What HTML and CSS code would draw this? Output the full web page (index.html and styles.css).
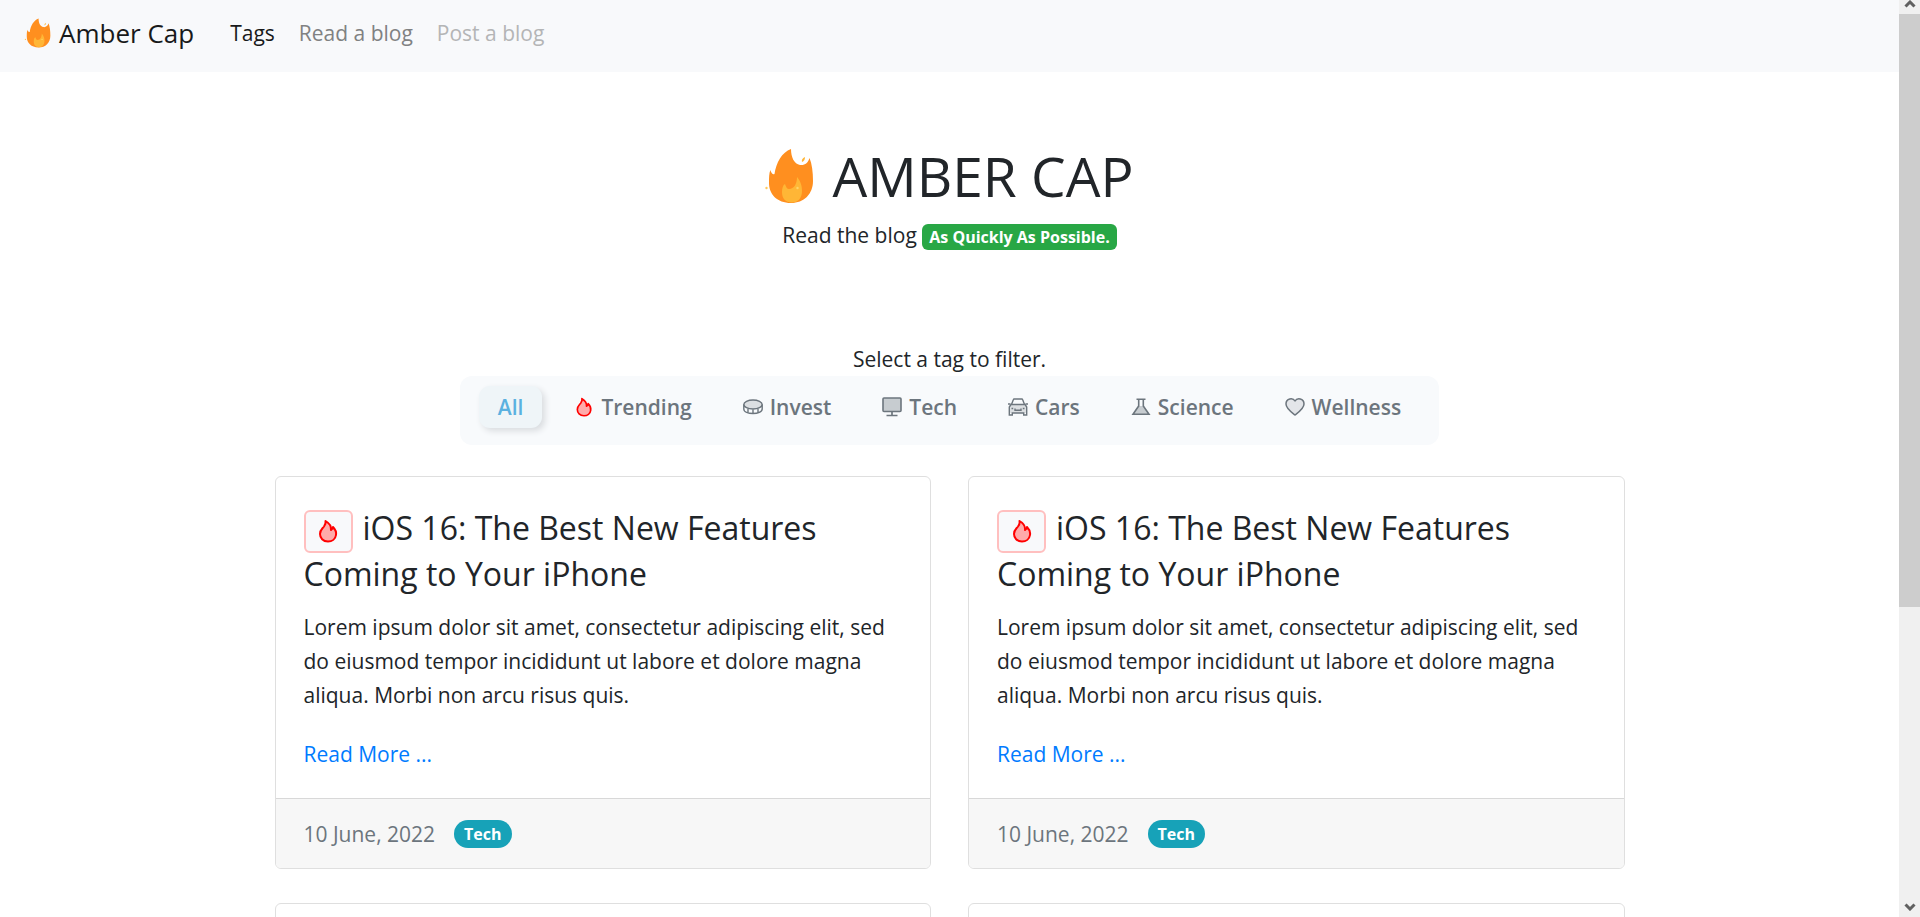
FILE: index.html
```html
<!DOCTYPE html>
<html lang="en">
<head>
<meta charset="utf-8">
<title>Amber Cap</title>
<link rel="stylesheet" href="styles.css">
</head>
<body>
<svg class="sprite" aria-hidden="true">
  <symbol id="flame-logo" viewBox="0 0 48 56">
    <path fill="#ff8f1f" d="M26 1C26 9 29 16 35 17C40 17.500 43 15 44.500 10C47 16 48 24 48 33C48 46 39 55 26 55C12 55 4 46 4 35C4 30 4 25 5.500 22C6 25 8 27 9.500 26C11 15 17 4 26 1Z"/>
    <path fill="#ffb636" d="M32 29C36 34 37 38 37 43C37 50 33 54.500 27 54.500C20 54.500 17 50 17 44C17 40 18 37 20 36C21 39 22 41 24 41C29 41 32 36 32 29Z"/>
    <path fill="#ffb636" d="M37 14Q40 13 40 9Q36 11 37 14Z"/>
    <circle fill="#ffc95c" cx="1.500" cy="40" r="1.200"/>
    <circle fill="#ffd469" cx="32.500" cy="40" r="1.200"/>
  </symbol>
  <symbol id="fire" viewBox="0 0 20 24">
    <path d="M7.500 2C11 4 13.500 7 13 11C14.200 10.500 15 9.500 15 8C17.500 10.500 18.500 13 18 16C17.500 20 14 22.500 10 22.500C5 22.500 2 19 2 15C2 11 4 10 6 7.500C7.500 5.500 8 4 7.500 2Z" fill="#faa" stroke="red" stroke-width="2" stroke-linejoin="round"/>
  </symbol>
  <symbol id="coin" viewBox="0 0 20 20">
    <g fill="none" stroke="currentColor" stroke-width="1.400"><ellipse cx="10" cy="7.500" rx="9.200" ry="4.500" fill="currentColor" fill-opacity=".2"/><path d="M.8 7.500V12C.8 18 19.200 18 19.200 12V7.500M5 11.500V15.500M10 12.500V16.500M15 11.500V15.500"/></g>
  </symbol>
  <symbol id="desktop" viewBox="0 0 20 20">
    <path fill="currentColor" fill-opacity=".35" stroke="currentColor" stroke-width="1.600" d="M2 1H18Q19 1 19 2V13.500Q19 14.500 18 14.500H2Q1 14.500 1 13.500V2Q1 1 2 1Z"/><path fill="none" stroke="currentColor" stroke-width="1.700" d="M10 14.500V18.500M4.500 18.500H15.500"/>
  </symbol>
  <symbol id="car" viewBox="0 0 20 20">
    <path fill="currentColor" fill-opacity=".2" d="M1.500 8H18.500V16H1.500Z"/>
    <g fill="none" stroke="currentColor" stroke-width="1.400"><path d="M3.500 7.500L5.300 2.700Q5.500 2 6.300 2H13.700Q14.500 2 14.700 2.700L16.500 7.500M0 7H2.500M17.500 7H20"/><path d="M3 7.500H17L18.700 10V18H15.700V16H4.300V18H1.300V10Z"/><path d="M7 11.500V13.300H13V11.500M3.500 11.500H5.200M14.800 11.500H16.500"/></g>
  </symbol>
  <symbol id="flask" viewBox="0 0 20 20">
    <path fill="currentColor" fill-opacity=".35" d="M7.700 9H12.300L18 17.500H2Z"/><path fill="none" stroke="currentColor" stroke-width="1.600" d="M5.500 2.300H14.500M7.700 2.500V9L2 17.300H18L12.300 9V2.500"/>
  </symbol>
  <symbol id="heart" viewBox="0 0 20 20">
    <path fill="currentColor" fill-opacity=".15" stroke="currentColor" stroke-width="1.500" stroke-linejoin="round" d="M10 18C6 15 1 11.500 1 7C1 1 8 .5 10 4C12 .5 19 1 19 7C19 11.500 14 15 10 18Z"/>
  </symbol>
</svg>
<div class="window">
  <div class="page">
    <nav class="navbar">
      <a class="brand" href="#"><svg class="brand-icon"><use href="#flame-logo"/></svg>Amber Cap</a>
      <a class="nav-link active" href="#">Tags</a>
      <a class="nav-link" href="#">Read a blog</a>
      <a class="nav-link disabled" href="#" aria-disabled="true">Post a blog</a>
    </nav>
    <header class="hero">
      <h1 class="hero-title"><svg class="hero-icon"><use href="#flame-logo"/></svg>AMBER CAP</h1>
      <p class="hero-text">Read the blog <span class="badge">As Quickly As Possible.</span></p>
    </header>
    <main class="container">
      <p class="filter-label" id="filter-label">Select a tag to filter.</p>
      <div class="filters" role="group" aria-labelledby="filter-label">
        <button class="tag selected" type="button">All</button>
        <button class="tag" type="button"><svg class="icon"><use href="#fire"/></svg>Trending</button>
        <button class="tag" type="button"><svg class="icon"><use href="#coin"/></svg>Invest</button>
        <button class="tag" type="button"><svg class="icon"><use href="#desktop"/></svg>Tech</button>
        <button class="tag" type="button"><svg class="icon"><use href="#car"/></svg>Cars</button>
        <button class="tag" type="button"><svg class="icon"><use href="#flask"/></svg>Science</button>
        <button class="tag" type="button"><svg class="icon"><use href="#heart"/></svg>Wellness</button>
      </div>
      <div class="cards">
        <article class="card">
          <div class="card-body">
            <h2 class="card-title"><span class="hot"><svg class="hot-icon"><use href="#fire"/></svg></span>iOS 16: The Best New Features Coming to Your iPhone</h2>
            <p class="card-text">Lorem ipsum dolor sit amet, consectetur adipiscing elit, sed do eiusmod tempor incididunt ut labore et dolore magna aliqua. Morbi non arcu risus quis.</p>
            <a class="more" href="#">Read More ...</a>
          </div>
          <footer class="card-footer">10 June, 2022<span class="pill">Tech</span></footer>
        </article>
        <article class="card">
          <div class="card-body">
            <h2 class="card-title"><span class="hot"><svg class="hot-icon"><use href="#fire"/></svg></span>iOS 16: The Best New Features Coming to Your iPhone</h2>
            <p class="card-text">Lorem ipsum dolor sit amet, consectetur adipiscing elit, sed do eiusmod tempor incididunt ut labore et dolore magna aliqua. Morbi non arcu risus quis.</p>
            <a class="more" href="#">Read More ...</a>
          </div>
          <footer class="card-footer">10 June, 2022<span class="pill">Tech</span></footer>
        </article>
        <article class="card card-next"></article>
        <article class="card card-next"></article>
      </div>
    </main>
  </div>
  <div class="scrollbar" aria-hidden="true">
    <svg class="arrow-up" viewBox="0 0 12 8"><path d="M1.500 6.500L6 2L10.500 6.500"/></svg>
    <div class="thumb"></div>
    <svg class="arrow-down" viewBox="0 0 12 8"><path d="M1.500 1.500L6 6L10.500 1.500"/></svg>
  </div>
</div>
</body>
</html>
```
FILE: styles.css
```css
* { box-sizing: border-box; }
body {
  margin: 0;
  font-family: "Segoe UI", "Open Sans", "Noto Sans", sans-serif;
  font-size: 21px;
  line-height: 34px;
  color: #212529;
  background: #fff;
}
a { text-decoration: none; }
h1, h2, p { margin: 0; font-weight: 400; }
.sprite { position: absolute; width: 0; height: 0; }
.window { display: flex; height: 100vh; overflow: hidden; }
.page { flex: 1; min-width: 0; overflow: hidden; }

.navbar {
  display: flex;
  align-items: center;
  gap: 24px;
  height: 72px;
  padding: 0 24px 6px;
  background: #f8f9fb;
}
.brand {
  display: flex;
  align-items: center;
  gap: 8px;
  margin-right: 12px;
  font-size: 26px;
  color: #18191a;
}
.brand-icon { width: 27px; height: 30px; }
.nav-link { color: #808182; }
.nav-link.active { color: #18191a; }
.nav-link.disabled { color: #b4b5b6; }

.hero { padding: 68px 24px 90px; text-align: center; }
.hero-title {
  display: flex;
  justify-content: center;
  align-items: center;
  gap: 19px;
  margin-bottom: 6px;
  font-size: 55px;
  line-height: 72px;
}
.hero-icon { width: 48px; height: 56px; }
.badge {
  display: inline-block;
  padding: 5px 7px;
  border-radius: 6px;
  background: #28a745;
  color: #fff;
  font-size: 16px;
  font-weight: 700;
  line-height: 16px;
}

.container { max-width: 1398px; margin: 0 auto; padding: 0 24px; }
.filter-label { text-align: center; }
.filters {
  display: flex;
  gap: 13px;
  width: fit-content;
  margin: 0 auto 31px;
  padding: 10px 19px 17px;
  border-radius: 12px;
  background: #f8fafc;
}
.tag {
  display: flex;
  align-items: center;
  gap: 7px;
  padding: 4px 19px;
  border: 0;
  border-radius: 11px;
  background: none;
  color: #6c757d;
  font: 600 21px/34px "Segoe UI", "Open Sans", "Noto Sans", sans-serif;
}
.tag.selected {
  background: #eff5f8;
  color: #5bb1e0;
  box-shadow: 3px 3px 6px #d9dcdf;
}
.icon { width: 20px; height: 20px; }

.cards { display: grid; grid-template-columns: 1fr 1fr; gap: 34px 37px; }
.card {
  border: 1px solid #dfdfdf;
  border-radius: 6px;
  overflow: hidden;
}
.card-next { height: 392px; }
.card-body { padding: 28px 28px 27px; }
.card-title { margin-bottom: 13px; font-size: 32px; line-height: 46px; }
.hot {
  display: inline-flex;
  justify-content: center;
  align-items: center;
  width: 49px;
  height: 43px;
  margin: -2px 10px -2px 0;
  border: 2px solid #ffbfbf;
  border-radius: 6px;
  background: #f8f9fb;
  vertical-align: middle;
}
.hot-icon { width: 20px; height: 24px; }
.card-text { margin-bottom: 25px; }
.more { display: inline-block; color: #007bff; }
.card-footer {
  display: flex;
  align-items: center;
  gap: 19px;
  padding: 18px 28px 17px;
  border-top: 1px solid #d8d8d8;
  background: #f7f7f7;
  color: #6c757d;
}
.pill {
  padding: 6px 10px;
  border-radius: 14px;
  background: #17a2b8;
  color: #fff;
  font-size: 16px;
  font-weight: 700;
  line-height: 16px;
}

.scrollbar {
  display: flex;
  flex-direction: column;
  align-items: center;
  width: 21px;
  background: #f0f0f0;
}
.thumb { width: 100%; height: 64.7%; margin-top: 6px; background: #cdcdcd; }
.arrow-up, .arrow-down {
  flex: none;
  width: 12px;
  height: 8px;
  fill: none;
  stroke: #606060;
  stroke-width: 3;
}
.arrow-down { margin-top: auto; margin-bottom: 6px; }
```
